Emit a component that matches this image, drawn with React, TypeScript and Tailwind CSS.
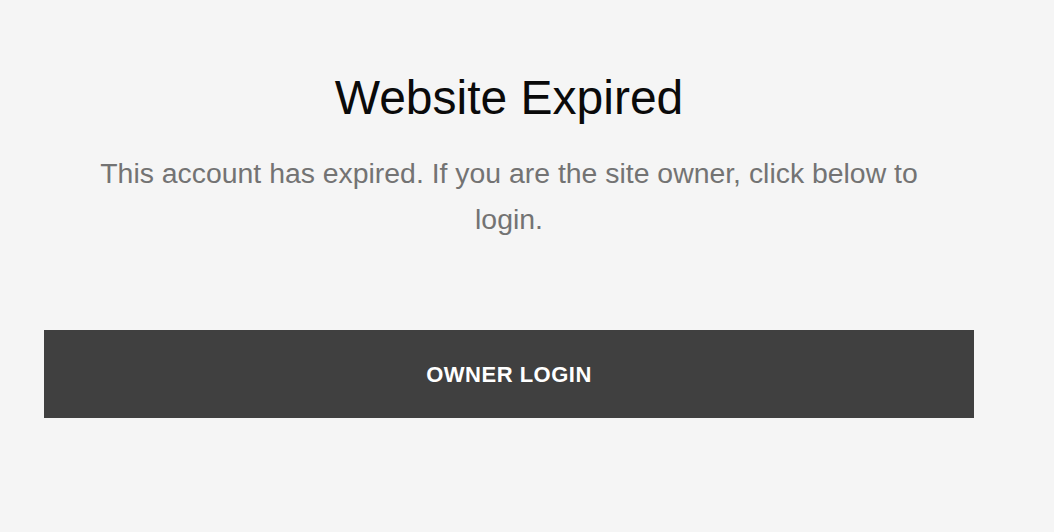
export default function App() {
  return (
    <div
      className="min-h-[532px] w-full bg-[#f5f5f5]"
      style={{ fontFamily: '"Liberation Sans", Arial, sans-serif' }}
    >
      <div className="ml-[44px] w-[930px] pt-[70px] flex flex-col">
        <h1 className="text-center text-[48px] leading-[56px] text-[#0a0a0a] font-normal">
          Website Expired
        </h1>
        <p className="mt-[24px] px-[36px] text-center text-[28.4px] leading-[46px] text-[#737373]">
          This account has expired. If you are the site owner, click below to login.
        </p>
        <button className="mt-[88px] h-[88px] w-full bg-[#404040] flex items-center justify-center text-white font-bold text-[22px] tracking-[0.5px]">
          OWNER LOGIN
        </button>
      </div>
    </div>
  );
}
